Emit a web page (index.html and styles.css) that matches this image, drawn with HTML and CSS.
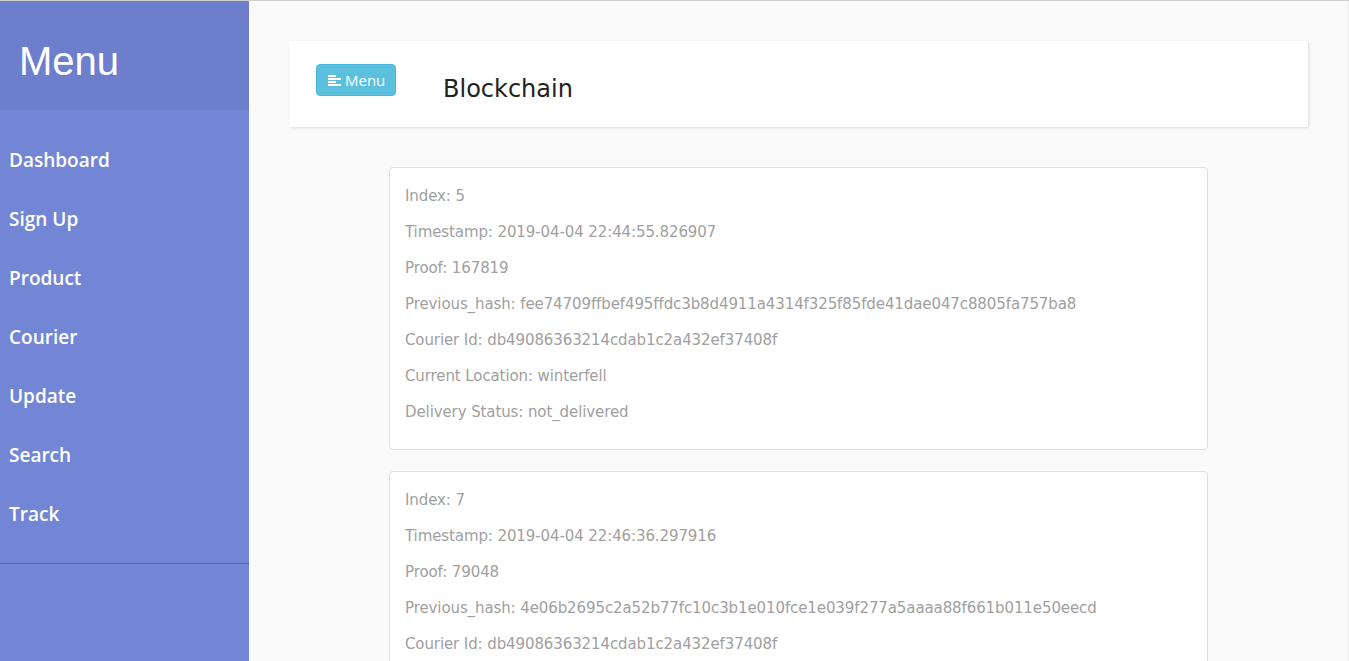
FILE: index.html
```html
<!DOCTYPE html>
<html>
<head>
<meta charset="utf-8">
<link rel="stylesheet" href="styles.css">
</head>
<body>
<div class="wrapper">
  <nav class="sidebar">
    <div class="sidebar-header"><h3>Menu</h3></div>
    <ul class="components">
      <li><a href="#">Dashboard</a></li>
      <li><a href="#">Sign Up</a></li>
      <li><a href="#">Product</a></li>
      <li><a href="#">Courier</a></li>
      <li><a href="#">Update</a></li>
      <li><a href="#">Search</a></li>
      <li><a href="#">Track</a></li>
    </ul>
  </nav>
  <main class="content">
    <div class="topbar">
      <button class="btn-menu">
        <svg class="icon" width="13" height="11" viewBox="0 0 13 11"><rect x="0" y="0" width="8" height="2" fill="#fff"/><rect x="0" y="3" width="13" height="2" fill="#fff"/><rect x="0" y="6" width="8" height="2" fill="#fff"/><rect x="0" y="9" width="13" height="2" fill="#fff"/></svg>
        <span>Menu</span>
      </button>
      <h2 class="title">Blockchain</h2>
    </div>
    <div class="blocks">
      <div class="card">
        <p>Index: 5</p>
        <p>Timestamp: 2019-04-04 22:44:55.826907</p>
        <p>Proof: 167819</p>
        <p>Previous_hash: fee74709ffbef495ffdc3b8d4911a4314f325f85fde41dae047c8805fa757ba8</p>
        <p>Courier Id: db49086363214cdab1c2a432ef37408f</p>
        <p>Current Location: winterfell</p>
        <p>Delivery Status: not_delivered</p>
      </div>
      <div class="card">
        <p>Index: 7</p>
        <p>Timestamp: 2019-04-04 22:46:36.297916</p>
        <p>Proof: 79048</p>
        <p>Previous_hash: 4e06b2695c2a52b77fc10c3b1e010fce1e039f277a5aaaa88f661b011e50eecd</p>
        <p>Courier Id: db49086363214cdab1c2a432ef37408f</p>
        <p>Current Location: winterfell</p>
        <p>Delivery Status: not_delivered</p>
      </div>
    </div>
  </main>
</div>
</body>
</html>
```
FILE: styles.css
```css
html, body {
  margin: 0;
  padding: 0;
  height: 100%;
  overflow: hidden;
}
body {
  font-family: "Open Sans", "Noto Sans", sans-serif;
  background: #fafafa;
  border-top: 1px solid #cfcfcf;
  box-sizing: border-box;
}
.wrapper {
  display: flex;
  align-items: stretch;
  min-height: 660px;
  border-right: 1px solid #ececec;
}
.sidebar {
  width: 249px;
  flex: 0 0 249px;
  background: #7386d5;
  color: #fff;
}
.sidebar-header {
  background: #6d7fcc;
  height: 109px;
  padding: 0 19px;
  box-sizing: border-box;
}
.sidebar-header h3 {
  margin: 0;
  padding-top: 37px;
  font-family: "Liberation Sans", Arial, sans-serif;
  font-weight: 400;
  font-size: 40px;
  line-height: 46px;
  color: #fff;
}
.components {
  list-style: none;
  margin: 0;
  padding: 20px 0;
  border-bottom: 1px solid #47748b;
}
.components li a {
  display: block;
  height: 59px;
  line-height: 61px;
  padding: 0 9px;
  color: #fff;
  text-decoration: none;
  font-size: 19px;
  font-weight: 600;
}
.content {
  flex: 1;
  padding: 40px 40px 0 40px;
  min-width: 0;
}
.topbar {
  background: #fff;
  height: 86px;
  box-shadow: 1px 1px 3px rgba(0, 0, 0, 0.12);
  display: flex;
  align-items: flex-start;
  padding: 23px 27px 0;
  box-sizing: border-box;
}
.btn-menu {
  display: flex;
  align-items: center;
  gap: 4px;
  height: 32px;
  width: 80px;
  padding: 0 11px;
  background: #5bc0de;
  border: 1px solid #46b8da;
  border-radius: 4px;
  color: #fff;
  font-family: "Open Sans", sans-serif;
  font-size: 15px;
  box-sizing: border-box;
}
.icon {
  flex: 0 0 13px;
  width: 13px;
  height: 11px;
}
.title {
  margin: 9px 0 0 47px;
  font-family: "DejaVu Sans", sans-serif;
  font-size: 24px;
  font-weight: 400;
  color: #222;
  line-height: 32px;
}
.blocks {
  width: 819px;
  margin: 40px auto 0;
  display: flex;
  flex-direction: column;
  gap: 21px;
}
.card {
  background: #fff;
  border: 1px solid #dedede;
  border-radius: 4px;
  padding: 15px 15px 14px;
}
.card p {
  margin: 0 0 10px;
  height: 26px;
  line-height: 26px;
  font-family: "DejaVu Sans", sans-serif;
  font-size: 15px;
  font-weight: 400;
  letter-spacing: -0.1px;
  color: #a0a0a0;
  white-space: nowrap;
}
```
